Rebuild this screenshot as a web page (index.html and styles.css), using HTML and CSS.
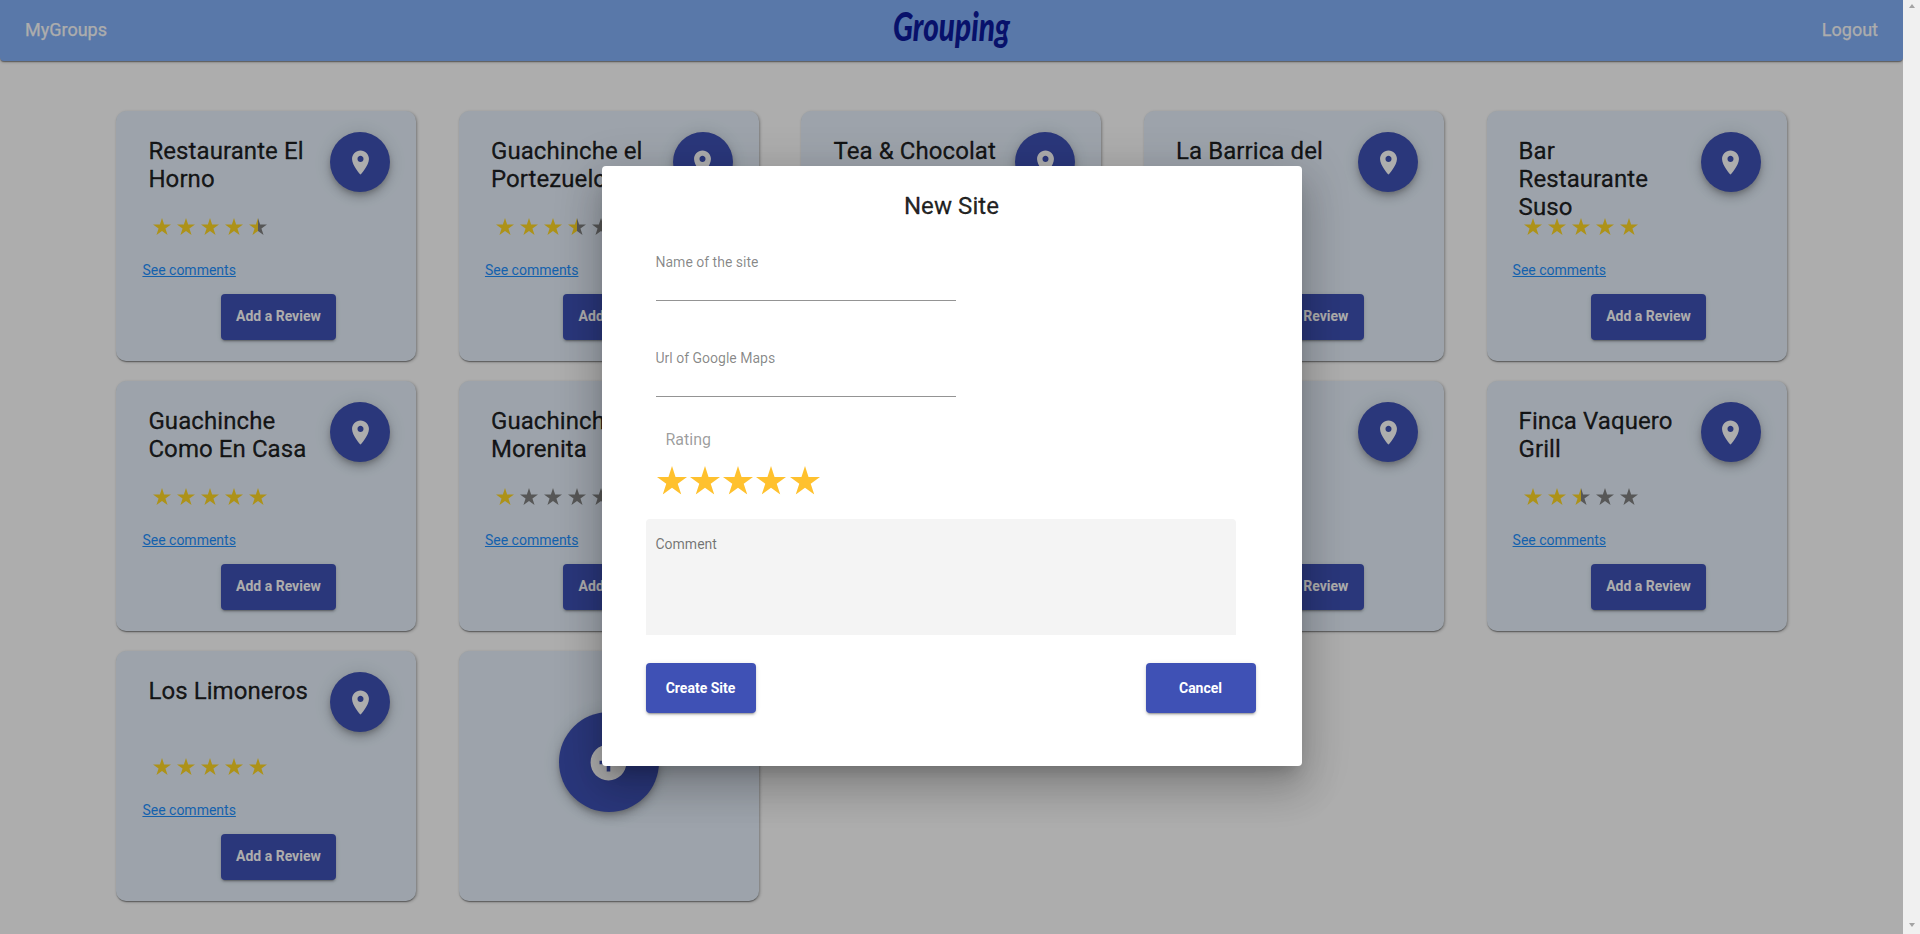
FILE: index.html
```html
<!DOCTYPE html>
<html lang="en">
<head>
<meta charset="utf-8">
<title>Grouping</title>
<link rel="stylesheet" href="styles.css">
</head>
<body>
<svg class="defs" aria-hidden="true">
  <symbol id="star" viewBox="0 0 20 19" preserveAspectRatio="none"><path d="M10 0l2.36 7.26H20l-6.18 4.49L16.18 19 10 14.5 3.82 19l2.36-7.25L0 7.26h7.64z"/></symbol>
  <symbol id="half" viewBox="0 0 20 19" preserveAspectRatio="none"><path class="off" d="M10 0l2.36 7.26H20l-6.18 4.49L16.18 19 10 14.5z"/><path d="M10 0v14.5L3.82 19l2.36-7.25L0 7.26h7.64z"/></symbol>
  <symbol id="pin" viewBox="0 0 24 24"><path d="M12 2C8.13 2 5 5.13 5 9c0 5.25 7 13 7 13s7-7.75 7-13c0-3.87-3.13-7-7-7zm0 9.5c-1.38 0-2.5-1.12-2.5-2.5s1.12-2.5 2.5-2.5 2.5 1.12 2.5 2.5-1.12 2.5-2.5 2.5z"/></symbol>
  <symbol id="add" viewBox="0 0 24 24"><path d="M12 2C6.48 2 2 6.48 2 12s4.48 10 10 10 10-4.48 10-10S17.52 2 12 2zm5 11h-4v4h-2v-4H7v-2h4V7h2v4h4v2z"/></symbol>
</svg>
<div class="window">
  <div class="page">
    <header class="navbar">
      <a class="nav-link">MyGroups</a>
      <svg class="logo" viewBox="0 0 140 60"><text x="11" y="41" textLength="117" lengthAdjust="spacingAndGlyphs">Grouping</text></svg>
      <a class="nav-link">Logout</a>
    </header>
    <main class="sites" id="sites"></main>
    <div class="overlay">
      <section class="modal">
        <h2 class="modal-title">New Site</h2>
        <label class="field">Name of the site</label>
        <label class="field">Url of Google Maps</label>
        <div class="rating-label">Rating</div>
        <div class="rating">
          <svg><use href="#star"/></svg><svg><use href="#star"/></svg><svg><use href="#star"/></svg><svg><use href="#star"/></svg><svg><use href="#star"/></svg>
        </div>
        <div class="comment">Comment</div>
        <div class="actions">
          <button class="btn">Create Site</button>
          <button class="btn">Cancel</button>
        </div>
      </section>
    </div>
  </div>
  <div class="scrollbar"><i class="up"></i><i class="down"></i></div>
</div>
<script src="sites.js"></script>
</body>
</html>
```
FILE: sites.js
```js
const sites = [
  ["Restaurante El Horno", 4.5],
  ["Guachinche el Portezuelo", 3.5],
  ["Tea & Chocolat", 5],
  ["La Barrica del", 5],
  ["Bar Restaurante Suso", 5],
  ["Guachinche Como En Casa", 5],
  ["Guachinche Morenita", 1],
  ["", 5],
  ["", 5],
  ["Finca Vaquero Grill", 2.5],
  ["Los Limoneros", 5]
];

function star(rating, i) {
  if (rating >= i) return '<svg><use href="#star"/></svg>';
  if (rating > i - 1) return '<svg><use href="#half"/></svg>';
  return '<svg class="off"><use href="#star"/></svg>';
}

document.getElementById("sites").innerHTML = sites.map(([name, rating]) => `
  <article class="card">
    <div class="card-head">
      <h3 class="card-title">${name.replace("&", "&amp;")}</h3>
      <span class="fab"><svg><use href="#pin"/></svg></span>
    </div>
    <div class="stars">${[1, 2, 3, 4, 5].map(i => star(rating, i)).join("")}</div>
    <a class="comments">See comments</a>
    <button class="btn review">Add a Review</button>
  </article>`).join("") +
  '<article class="card card-add"><span class="fab fab-big"><svg><use href="#add"/></svg></span></article>';
```
FILE: styles.css
```css
* { box-sizing: border-box; }
body {
  margin: 0;
  background: #fff;
  font-family: Roboto, "Liberation Sans", sans-serif;
  overflow: hidden;
}
.defs { position: absolute; width: 0; height: 0; }
.window { display: flex; height: 934px; }
.page { position: relative; flex: 1; overflow: hidden; }

.navbar {
  display: grid;
  grid-template-columns: 1fr 140px 1fr;
  height: 61px;
  padding: 0 25px;
  background: #84b1fa;
  border-radius: 0 0 4px 4px;
  box-shadow: 0 2px 1px -1px rgba(0,0,0,.2), 0 1px 1px rgba(0,0,0,.14), 0 1px 3px rgba(0,0,0,.3);
}
.nav-link { color: #fff; font-size: 18px; line-height: 59px; -webkit-text-stroke: .25px; }
.nav-link:last-child { text-align: right; }
.logo { width: 140px; height: 60px; overflow: visible; }
.logo text { font: italic 900 39px Lato, sans-serif; fill: #0c1a9e; }

.sites {
  display: grid;
  grid-template-columns: repeat(5, 1fr);
  justify-items: center;
  row-gap: 20px;
  width: 90%;
  margin: 50px auto 0;
}
.card {
  display: flex;
  flex-direction: column;
  width: 300px;
  height: 250px;
  padding: 21px 26px 0;
  background: #e7f1fc;
  border-radius: 10px;
  box-shadow: 0 2px 1px -1px rgba(0,0,0,.2), 0 1px 1px rgba(0,0,0,.14), 1px 1px 3px rgba(0,0,0,.3);
}
.card-head { display: flex; justify-content: space-between; height: 86px; padding-left: 6px; }
.card-title {
  width: 164px;
  margin: 5px 0 0;
  color: rgba(0,0,0,.87);
  font-size: 24px;
  font-weight: 400;
  letter-spacing: .08px;
  line-height: 28px;
  -webkit-text-stroke: .3px;
}
.fab {
  display: flex;
  align-items: center;
  justify-content: center;
  width: 60px;
  height: 60px;
  border-radius: 50%;
  background: #3f51b5;
  fill: #fff;
  box-shadow: 0 3px 5px -1px rgba(0,0,0,.2), 0 6px 10px rgba(0,0,0,.14), 0 1px 18px rgba(0,0,0,.12);
}
.fab svg { width: 29px; height: 29px; }
.stars { display: flex; gap: 6px; height: 17px; padding-left: 11px; fill: #ffd724; }
.stars svg { width: 18px; height: 17px; }
.off { fill: #808080; }
.comments {
  margin-top: 25px;
  color: #1e90ff;
  font-size: 14px;
  line-height: 20px;
  text-decoration: underline;
}
.btn {
  width: 110px;
  height: 50px;
  padding: 0 0 1px;
  border: 0;
  border-radius: 4px;
  background: #3f51b5;
  color: #fff;
  font: 700 14px Roboto, sans-serif;
  box-shadow: 0 3px 1px -2px rgba(0,0,0,.2), 0 2px 2px rgba(0,0,0,.14), 0 1px 5px rgba(0,0,0,.12);
}
.review { align-self: center; width: 115px; height: 46px; margin: 14px 0 0 24px; padding-bottom: 2px; }
.card-add { align-items: center; padding-top: 61px; }
.fab-big { width: 100px; height: 100px; }
.fab-big svg { width: 43px; height: 43px; }

.overlay {
  position: absolute;
  inset: 0;
  display: flex;
  align-items: center;
  justify-content: center;
  padding-bottom: 2px;
  background: rgba(0,0,0,.32);
}
.modal {
  width: 700px;
  height: 600px;
  padding: 24px 44px 0;
  border-radius: 4px;
  background: #fff;
  box-shadow: 0 11px 15px -7px rgba(0,0,0,.2), 0 24px 38px 3px rgba(0,0,0,.14), 0 9px 46px 8px rgba(0,0,0,.12);
}
.modal-title {
  margin: 0 0 28px;
  color: rgba(0,0,0,.87);
  font-size: 24px;
  font-weight: 400;
  letter-spacing: .08px;
  line-height: 32px;
  text-align: center;
  -webkit-text-stroke: .3px;
}
.field {
  display: block;
  width: 300px;
  height: 51px;
  margin: 0 0 45px 10px;
  padding-top: 2px;
  border-bottom: 1px solid #949494;
  color: rgba(0,0,0,.48);
  font-size: 14px;
  line-height: 20px;
}
.rating-label { margin: -12px 0 0 20px; color: rgba(0,0,0,.4); font-size: 16px; line-height: 20px; }
.rating { display: flex; gap: 3.3px; margin: 16px 0 0 11px; fill: #ffc12e; }
.rating svg { width: 30px; height: 28.5px; }
.comment {
  width: 590px;
  height: 116px;
  margin: 24.5px 0 28px;
  padding: 15px 10px;
  border-radius: 4px 4px 0 0;
  background: #f4f4f4;
  color: rgba(0,0,0,.54);
  font-size: 14px;
  line-height: 20px;
}
.actions { display: flex; justify-content: space-between; width: 610px; }

.scrollbar {
  display: flex;
  flex-direction: column;
  justify-content: space-between;
  align-items: center;
  width: 17px;
  padding: 4px 0 7px;
  background: #f0f0f0;
}
.up, .down { border: 3.5px solid transparent; }
.up { border-top: 0; border-bottom: 4px solid #a3a3a3; }
.down { border-bottom: 0; border-top: 4px solid #a3a3a3; }
```
